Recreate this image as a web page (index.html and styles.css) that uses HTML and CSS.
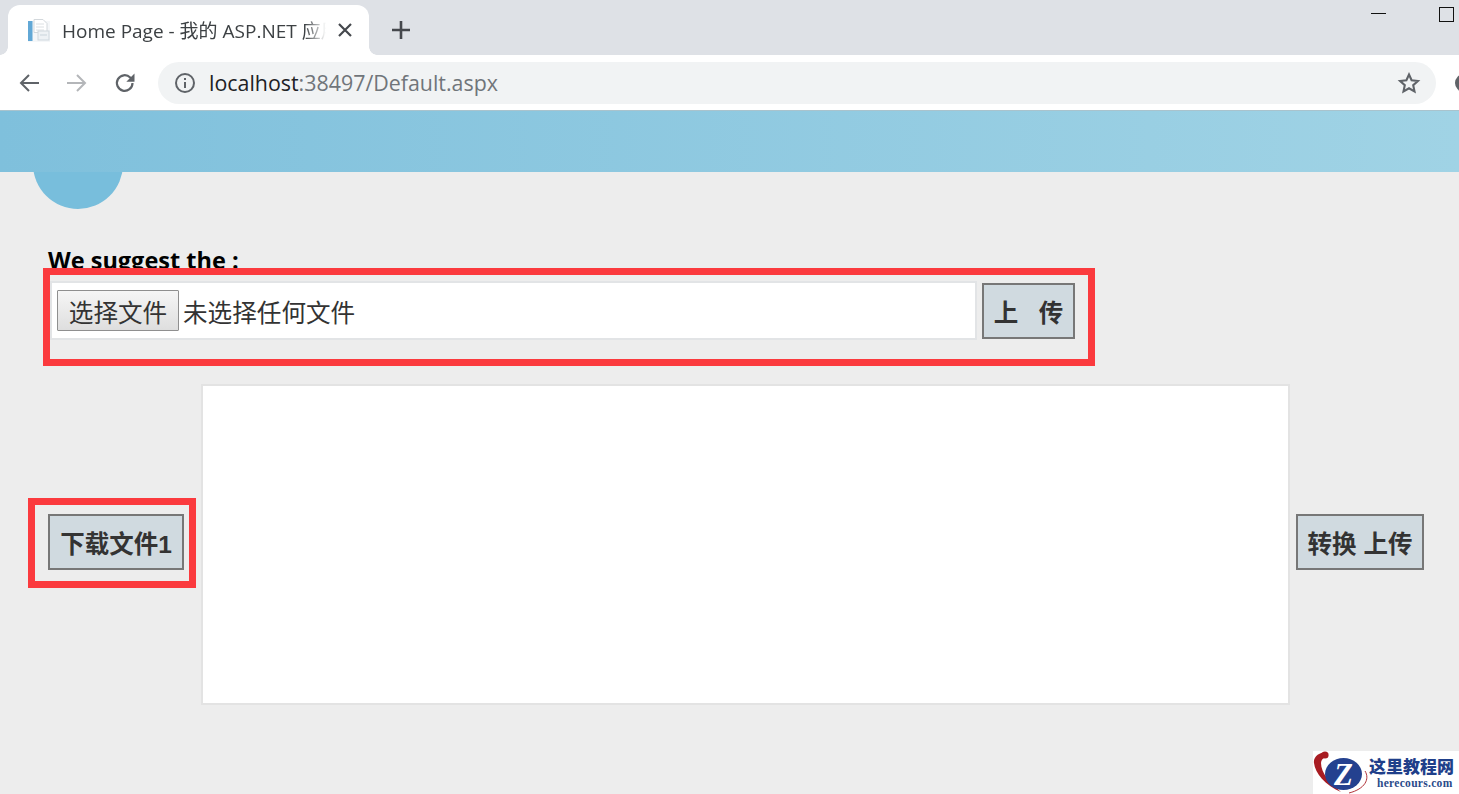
FILE: index.html
```html
<!DOCTYPE html>
<html lang="zh">
<head>
<meta charset="utf-8">
<title>Home Page - 我的 ASP.NET 应用程序</title>
<link rel="stylesheet" href="styles.css">
</head>
<body>
<header class="chrome">
  <div class="tabstrip">
    <div class="tab">
      <svg class="favicon" viewBox="0 0 24 24" width="24" height="24">
        <rect x="2" y="3" width="22" height="21" fill="#f5f7f9"/>
        <rect x="2" y="3" width="4.5" height="20" fill="#62a8d6"/>
        <path d="M8 1.5h9l4 4v9H8z" fill="#fff" stroke="#d3d8dc"/>
        <path d="M10 6h8M10 9h8M10 12h8" stroke="#dce0e3"/>
        <rect x="12" y="13" width="11" height="9" fill="#eef2f5" stroke="#cfd8de"/>
        <path d="M14 17h7" stroke="#c9d4db"/>
      </svg>
      <span class="tab-title">Home Page - 我的 ASP.NET 应用</span>
      <svg class="tab-close" viewBox="0 0 14 14" width="14" height="14"><path d="M1 1l12 12M13 1L1 13" stroke="#45484d" stroke-width="2.2"/></svg>
    </div>
    <svg class="new-tab" viewBox="0 0 18 18" width="18" height="18"><path d="M9 0v18M0 9h18" stroke="#45484d" stroke-width="2.6"/></svg>
    <div class="window-controls">
      <span class="win-min"></span>
      <span class="win-max"></span>
    </div>
  </div>
  <div class="toolbar">
    <svg class="nav" viewBox="0 0 20 20" width="20" height="20"><path d="M20 10H2M10 2l-8 8 8 8" fill="none" stroke="#5f6368" stroke-width="2"/></svg>
    <svg class="nav" viewBox="0 0 20 20" width="20" height="20"><path d="M0 10h18M10 2l8 8-8 8" fill="none" stroke="#b4b6b9" stroke-width="2"/></svg>
    <svg class="nav" viewBox="0 0 22 22" width="22" height="22"><path d="M18.5 11a7.8 7.8 0 1 1-2.3-5.5L19 8.2" fill="none" stroke="#5f6368" stroke-width="2.2"/><path d="M20.5 1.5v8.2h-8.2z" fill="#5f6368"/></svg>
    <div class="omnibox">
      <svg class="info" viewBox="0 0 20 20" width="20" height="20"><circle cx="10" cy="10" r="9" fill="none" stroke="#5f6368" stroke-width="2"/><path d="M9 9h2v6H9zM9 5h2v2H9z" fill="#5f6368"/></svg>
      <span class="url"><span class="host">localhost</span>:38497/Default.aspx</span>
      <svg class="star" viewBox="0 0 24 24" width="24" height="24"><path d="M12 3.5l2.6 5.8 6.3.7-4.7 4.2 1.3 6.2L12 17.3l-5.5 3.1 1.3-6.2L3.1 10l6.3-.7z" fill="none" stroke="#5f6368" stroke-width="2.1"/></svg>
    </div>
    <span class="avatar"></span>
  </div>
</header>

<div class="banner"><span class="banner-circle"></span></div>

<main class="content">
  <h2 class="suggest">We suggest the :</h2>
  <div class="upload-row">
    <div class="file-box">
      <button class="file-btn" type="button">选择文件</button>
      <span class="file-name">未选择任何文件</span>
    </div>
    <button class="action upload-btn" type="button">上&nbsp;&nbsp;&nbsp;传</button>
  </div>
  <div class="preview-row">
    <div class="download-wrap">
      <button class="action download-btn" type="button">下载文件1</button>
    </div>
    <div class="preview"></div>
    <button class="action convert-btn" type="button">转换 上传</button>
  </div>
</main>

<aside class="watermark">
  <svg class="wm-logo" viewBox="0 0 56 43" width="56" height="43">
    <path d="M14 1C6 1 0 6 1 12c1 10 11 22 27 29C17 32 8 22 8 12c0-3 2-5 5-6z" fill="#a81c22"/>
    <circle cx="12" cy="4" r="3.6" fill="#a81c22"/>
    <path d="M52 20c5 8 0 18-16 22" fill="none" stroke="#a81c22" stroke-width=".9"/>
    <ellipse cx="30.5" cy="23" rx="18.5" ry="16" fill="#24418f"/>
    <text class="wm-z" x="30.5" y="34" text-anchor="middle">Z</text>
  </svg>
  <div class="wm-text">
    <span class="wm-cn">这里教程网</span>
    <span class="wm-en">herecours.com</span>
  </div>
</aside>
</body>
</html>
```
FILE: styles.css
```css
* { box-sizing: border-box; }
html, body { margin: 0; height: 794px; overflow: hidden; }
body {
  position: relative;
  width: 1459px;
  background: #ededed;
  font-family: "Open Sans", "Noto Sans CJK SC", sans-serif;
}
.chrome { height: 110px; background: #fff; }
.tabstrip {
  height: 55px;
  background: #dee1e6;
  display: flex;
  align-items: flex-end;
  padding-left: 8px;
}
.tab {
  position: relative;
  width: 361px;
  height: 50px;
  background: #fff;
  border-radius: 12px 12px 0 0;
  display: flex;
  align-items: center;
  padding: 0 17px 0 18px;
}
.tab::before,
.tab::after {
  content: "";
  position: absolute;
  bottom: 0;
  width: 8px;
  height: 8px;
  background: radial-gradient(circle at 0 0, transparent 7.5px, #fff 8px);
}
.tab::before { left: -8px; }
.tab::after { right: -8px; transform: scaleX(-1); }
.favicon { flex: none; }
.tab-title {
  flex: 1;
  margin-left: 12px;
  width: 260px;
  overflow: hidden;
  white-space: nowrap;
  font-size: 19px;
  color: #3c4043;
  -webkit-mask-image: linear-gradient(to right, #000 92%, transparent 100%);
  mask-image: linear-gradient(to right, #000 92%, transparent 100%);
}
.tab-close { flex: none; margin-left: 12px; }
.new-tab { flex: none; margin: 0 0 16px 23px; }
.window-controls {
  margin-left: auto;
  align-self: flex-start;
  display: flex;
  align-items: flex-start;
  gap: 53px;
  padding: 7px 5px 0 0;
}
.win-min { width: 15px; height: 1px; margin-top: 6px; background: #111; }
.win-max { width: 15px; height: 15px; border: 1px solid #111; }
.toolbar {
  height: 55px;
  display: flex;
  align-items: center;
  padding: 0 0 0 19px;
}
.nav { flex: none; margin-right: 28px; }
.nav:nth-child(2) { margin-right: 27px; }
.nav:nth-child(3) { margin-right: 22px; }
.omnibox {
  flex: none;
  width: 1278px;
  height: 42px;
  border-radius: 21px;
  background: #f1f3f4;
  display: flex;
  align-items: center;
  padding: 0 15px 0 17px;
}
.info { flex: none; }
.url {
  margin-left: 14px;
  font-size: 21.4px;
  color: #70757a;
  white-space: nowrap;
}
.host { color: #202124; }
.star { margin-left: auto; flex: none; }
.avatar {
  flex: none;
  width: 18px;
  height: 18px;
  margin-left: 19px;
  border-radius: 50%;
  background: #5f6368;
}
.banner {
  position: relative;
  height: 62px;
  border-top: 1px solid #a9c3cd;
  background: linear-gradient(to right, #7fc0dc, #a0d3e5);
}
.banner-circle {
  position: absolute;
  z-index: -1;
  left: 33px;
  top: 8px;
  width: 90px;
  height: 90px;
  border-radius: 50%;
  background: #78bedc;
}
.suggest {
  margin: 71px 0 0 48px;
  height: 25px;
  font: 700 23.5px/34px "Open Sans", sans-serif;
  color: #000;
  white-space: nowrap;
}
.upload-row {
  position: relative;
  width: 1052px;
  height: 98px;
  margin-left: 43px;
  background: #ededed;
  border: 7px solid #fb3a3e;
  display: flex;
  align-items: flex-start;
  padding-top: 6px;
}
.file-box {
  width: 927px;
  height: 59px;
  background: #fff;
  border: 2px solid #e2e4e6;
  display: flex;
  align-items: center;
  padding: 0 5px;
  font-family: "Noto Sans CJK SC", sans-serif;
}
.file-btn {
  width: 122px;
  height: 41px;
  padding: 2px 0 0;
  border: 1px solid #8f8f8f;
  border-radius: 1px;
  background: linear-gradient(#f6f6f6, #dedede);
  font: 400 24.6px/1 "Noto Sans CJK SC", sans-serif;
  color: #333;
}
.file-name { margin-left: 4px; font-size: 24.6px; color: #333; }
.action {
  height: 56px;
  padding: 7px 0 0;
  background: #d0dae0;
  border: 2px solid #777;
  font: 700 24.5px/1 "Liberation Sans", "Noto Sans CJK SC", sans-serif;
  color: #333;
  white-space: nowrap;
}
.upload-btn { width: 93px; margin: 2px 0 0 5px; padding-top: 6px; }
.preview-row {
  display: flex;
  align-items: center;
  margin: 18px 0 0 28px;
  height: 321px;
}
.download-wrap {
  width: 168px;
  height: 90px;
  margin-bottom: 4px;
  border: 7px solid #fb3a3e;
  display: flex;
  align-items: center;
  padding-left: 13px;
}
.download-btn { width: 136px; margin-top: -2px; }
.preview {
  width: 1089px;
  height: 321px;
  margin-left: 5px;
  background: #fff;
  border: 2px solid #e3e3e3;
}
.convert-btn { width: 128px; margin: 0 0 5px 6px; }
.watermark {
  position: absolute;
  right: 0;
  bottom: 0;
  width: 146px;
  height: 43px;
  background: #fff;
  display: flex;
}
.wm-logo { flex: none; }
.wm-z { font: italic 700 31px "Liberation Serif", serif; fill: #fff; }
.wm-text {
  display: flex;
  flex-direction: column;
  align-items: flex-start;
  white-space: nowrap;
}
.wm-cn {
  font: 900 17px/22px "Noto Sans CJK SC", serif;
  color: #1f3f8a;
  margin-top: 4px;
}
.wm-en {
  margin: 0 0 0 8px;
  font: 700 11.5px/13px "Liberation Serif", serif;
  color: #2a4a8a;
  letter-spacing: .3px;
}
```
